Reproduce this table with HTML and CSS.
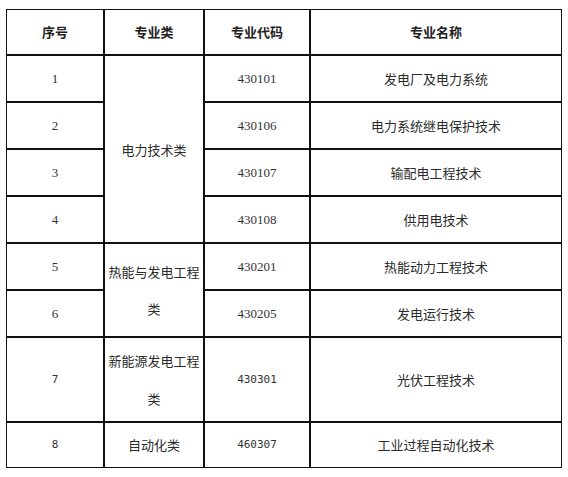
FILE: index.html
```html
<!DOCTYPE html>
<html lang="zh-CN">
<head>
<meta charset="utf-8">
<link rel="stylesheet" href="styles.css">
</head>
<body>
<div class="page">
<table class="majors">
  <thead>
    <tr>
      <th class="c1">序号</th>
      <th class="c2">专业类</th>
      <th class="c3">专业代码</th>
      <th class="c4">专业名称</th>
    </tr>
  </thead>
  <tbody>
    <tr>
      <td class="num">1</td>
      <td class="cat" rowspan="4">电力技术类</td>
      <td class="num">430101</td>
      <td>发电厂及电力系统</td>
    </tr>
    <tr>
      <td class="num">2</td>
      <td class="num">430106</td>
      <td>电力系统继电保护技术</td>
    </tr>
    <tr>
      <td class="num">3</td>
      <td class="num">430107</td>
      <td>输配电工程技术</td>
    </tr>
    <tr>
      <td class="num">4</td>
      <td class="num">430108</td>
      <td>供用电技术</td>
    </tr>
    <tr>
      <td class="num">5</td>
      <td class="cat" rowspan="2">热能与发电工程类</td>
      <td class="num">430201</td>
      <td>热能动力工程技术</td>
    </tr>
    <tr>
      <td class="num">6</td>
      <td class="num">430205</td>
      <td>发电运行技术</td>
    </tr>
    <tr class="tall">
      <td class="mono">7</td>
      <td class="cat">新能源发电工程类</td>
      <td class="mono">430301</td>
      <td>光伏工程技术</td>
    </tr>
    <tr class="last">
      <td class="mono">8</td>
      <td class="cat">自动化类</td>
      <td class="mono">460307</td>
      <td>工业过程自动化技术</td>
    </tr>
  </tbody>
</table>
</div>
</body>
</html>
```
FILE: styles.css
```css
html, body {
  margin: 0;
  padding: 0;
  background: #fff;
}

.page {
  padding: 9px 0 0 6px;
}

.majors {
  width: 556px;
  table-layout: fixed;
  border-collapse: separate;
  border-spacing: 0;
  font-family: "Noto Sans CJK SC", "Noto Sans", sans-serif;
  font-size: 13px;
  color: #2b2b2b;
}

.majors th,
.majors td {
  box-sizing: border-box;
  border: 1px solid #111;
  text-align: center;
  vertical-align: middle;
  padding: 4px 3px;
  line-height: 37px;
  overflow: hidden;
}

.majors th {
  font-weight: bold;
  color: #222;
  line-height: 36px;
}

.c1 { width: 98px; }
.c2 { width: 100px; }
.c3 { width: 106px; }
.c4 { width: 252px; }

.num {
  font-family: "Liberation Serif", "Times New Roman", serif;
  color: #333;
}

.mono {
  font-family: "DejaVu Sans Mono", "Liberation Mono", monospace;
  font-size: 11px;
  color: #333;
}

.tall td {
  line-height: 37.5px;
}

.last td {
  line-height: 36px;
}
```
